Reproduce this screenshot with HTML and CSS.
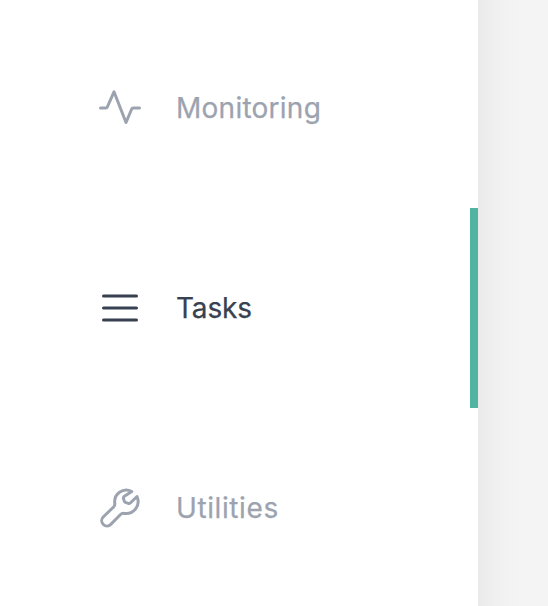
FILE: index.html
```html
<!DOCTYPE html>
<html lang="en">
<head>
<meta charset="utf-8">
<title>Tasks</title>
<link rel="stylesheet" href="styles.css">
</head>
<body>
<nav class="sidebar">
  <a class="item">
    <svg class="icon" viewBox="0 0 48 48"><path d="M4.500 24h5.300q1.100 0 1.500-1L18 7.800l12 30.700L35.700 25q.4-1 1.500-1H43.500"/></svg>
    <span class="label monitoring">Monitoring</span>
  </a>
  <a class="item active">
    <svg class="icon" viewBox="0 0 48 48"><path d="M7.500 12h33M7.500 24h33M7.500 36h33"/></svg>
    <span class="label tasks">Tasks</span>
  </a>
  <a class="item">
    <svg class="icon" viewBox="0 0 48 48"><path d="M35.800 7.500C27 3 17.500 10 18.800 19.500c.2 1.700-.2 2.500-1.200 3.500L7.200 33a5.200 5.200 0 0 0 7.600 7.400L24.500 30.500c1-1 1.900-1.300 3.500-1.100C37.500 31 45 21.500 41 12.500l-6.400 6.300q-1 1-2.400.5l-2.800-1q-.7-.3-1-1l-.9-2.600q-.4-1.200.5-2.100Z"/></svg>
    <span class="label utilities">Utilities</span>
  </a>
</nav>
<main class="content"></main>
</body>
</html>
```

FILE: styles.css
```css
body {
  margin: 0;
  height: 606px;
  display: flex;
  overflow: hidden;
  font-family: Inter, "Liberation Sans", sans-serif;
}
.sidebar {
  width: 478px;
  flex: none;
  box-sizing: border-box;
  padding-top: 8px;
  background: #fff;
}
.item {
  display: flex;
  align-items: center;
  box-sizing: border-box;
  height: 200px;
  padding-left: 96px;
  border-right: 8px solid transparent;
  color: #9ca3af;
}
.active {
  color: #374151;
  border-right-color: #53b3a3;
}
.icon {
  width: 48px;
  height: 48px;
  margin-right: 32px;
  fill: none;
  stroke: currentColor;
  stroke-width: 3;
  stroke-linecap: round;
  stroke-linejoin: round;
}
.label {
  font-size: 28px;
  line-height: 40px;
  -webkit-text-stroke: 0.25px currentColor;
}
.monitoring {
  letter-spacing: 0.25px;
}
.tasks {
  letter-spacing: -0.15px;
}
.utilities {
  letter-spacing: 0.6px;
}
.content {
  flex: 1;
  background: linear-gradient(90deg, #eaeaea, #efefef 14px, #f2f2f2 28px, #f4f4f4 45px);
}
```
